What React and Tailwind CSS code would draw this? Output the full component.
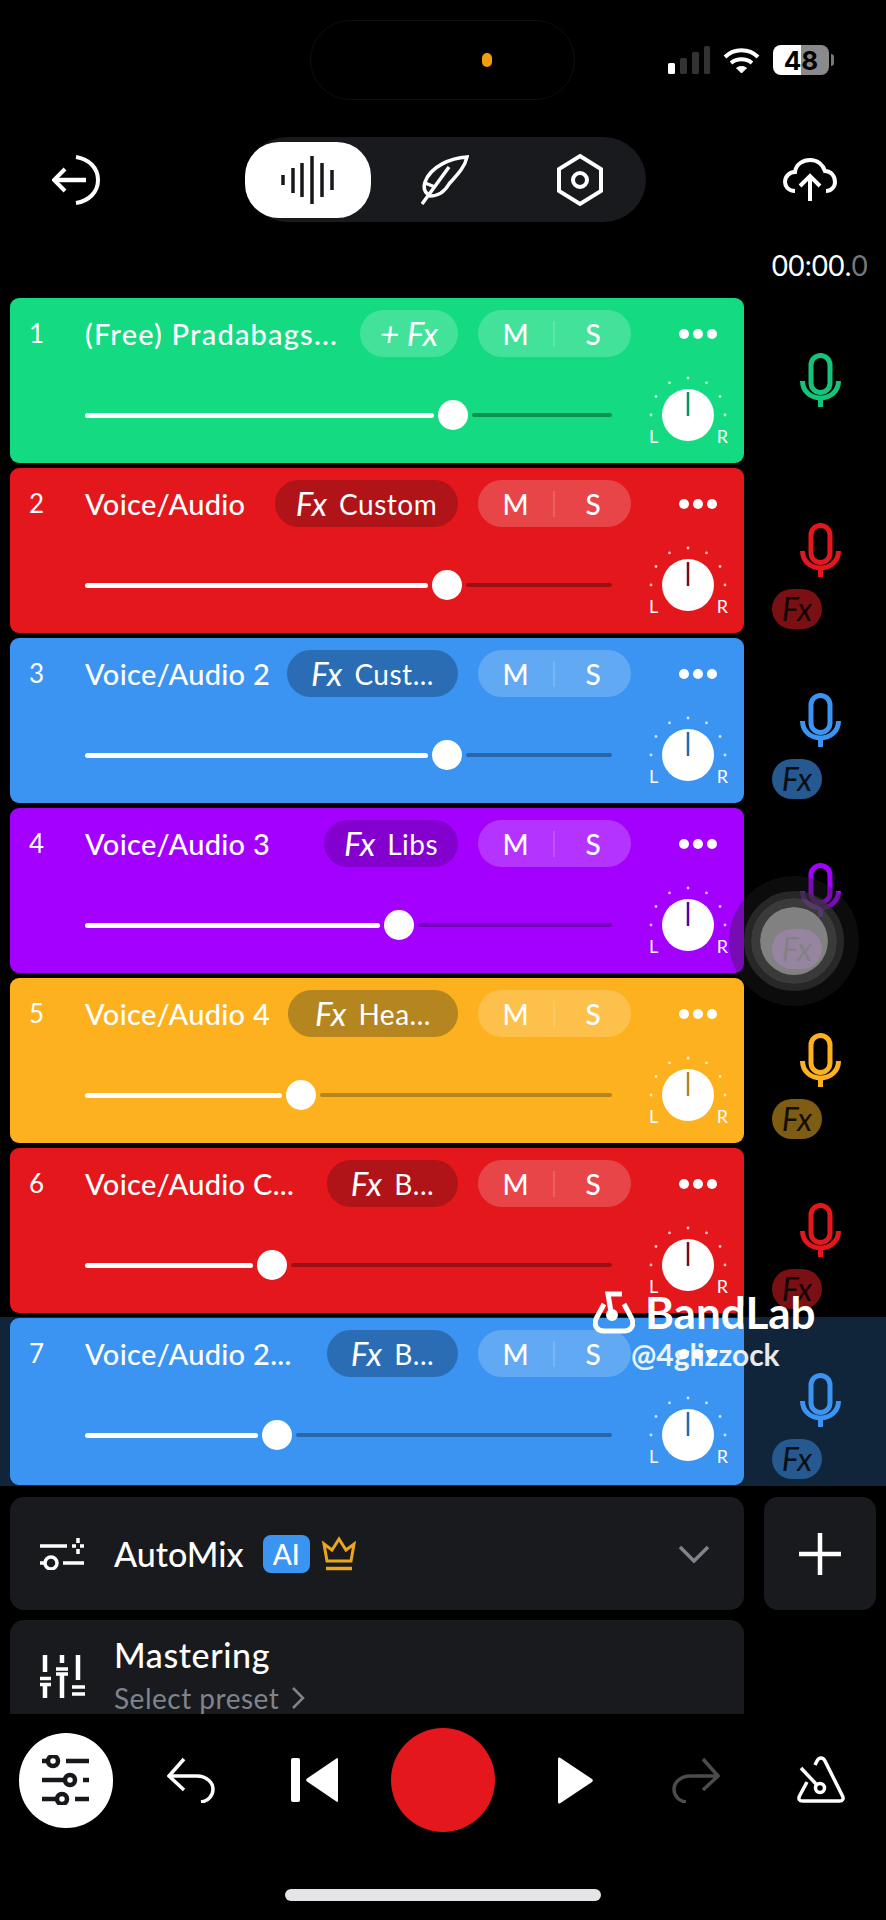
import React from "react";

const tracks = [
  { n: 1, name: "(Free) Pradabags...", nameClass: "tracking-[1.2px]", fx: "+ Fx", pillW: "w-[98px]", pos: 453, bg: "bg-[#14db82]", pill: "bg-white/20", rest: "bg-[#0c9155]", stroke: "#0c9155", mic: "#14c47a" },
  { n: 2, name: "Voice/Audio", nameClass: "tracking-[0.3px]", fx: "Fx", label: "Custom", pillW: "w-[183px]", pos: 447, bg: "bg-[#e3171c]", pill: "bg-[#b01318]", rest: "bg-[#9a1115]", stroke: "#7a0d10", mic: "#e3171c", badge: "bg-[#7a1013]" },
  { n: 3, name: "Voice/Audio 2", nameClass: "tracking-[0.3px]", fx: "Fx", label: "Cust...", pillW: "w-[171px]", pos: 447, bg: "bg-[#3b94f2]", pill: "bg-[#2a6db4]", rest: "bg-[#2a67a8]", stroke: "#2a67a8", mic: "#3b94f2", badge: "bg-[#25598f]" },
  { n: 4, name: "Voice/Audio 3", nameClass: "tracking-[0.3px]", fx: "Fx", label: "Libs", pillW: "w-[134px]", pos: 399, bg: "bg-[#a300ff]", pill: "bg-[#8300cf]", rest: "bg-[#7800bc]", stroke: "#5f0096", mic: "#a300ff", badge: "bg-[#5f0e8c]" },
  { n: 5, name: "Voice/Audio 4", nameClass: "tracking-[0.3px]", fx: "Fx", label: "Hea...", pillW: "w-[170px]", pos: 301, bg: "bg-[#fdb11e]", pill: "bg-[#b5851f]", rest: "bg-[#b5851f]", stroke: "#b5851f", mic: "#fdb11e", badge: "bg-[#7f5c13]" },
  { n: 6, name: "Voice/Audio C...", nameClass: "tracking-[0.3px]", fx: "Fx", label: "B...", pillW: "w-[131px]", pos: 272, bg: "bg-[#e3171c]", pill: "bg-[#b01318]", rest: "bg-[#9a1115]", stroke: "#7a0d10", mic: "#e3171c", badge: "bg-[#7a1013]" },
  { n: 7, name: "Voice/Audio 2...", nameClass: "tracking-[0.3px]", fx: "Fx", label: "B...", pillW: "w-[131px]", pos: 277, bg: "bg-[#3b94f2]", pill: "bg-[#2a6db4]", rest: "bg-[#2a67a8]", stroke: "#2a67a8", mic: "#3b94f2", badge: "bg-[#25598f]", selected: true },
];

const tickAngles = [0, 30, 60, 90, 120, 150, 180];

const Mic = ({ color }) => (
  <svg width="41" height="55" viewBox="0 0 41 55" fill="none" stroke={color} strokeWidth="5">
    <rect x="11" y="2.5" width="19" height="37" rx="9.5" />
    <path d="M2.5 28c0 10 8 17 18 17s18-7 18-17" />
    <path d="M20.5 45v9" />
  </svg>
);

const PanKnob = ({ stroke }) => (
  <div className="relative w-[84px] h-[84px] shrink-0">
    <svg width="84" height="84" viewBox="0 0 84 84">
      {tickAngles.map((a) => (
        <circle
          key={a}
          cx={42 + 37 * Math.cos((a * Math.PI) / 180)}
          cy={42 - 37 * Math.sin((a * Math.PI) / 180)}
          r="1.4"
          fill="#fff"
          opacity="0.75"
        />
      ))}
      <circle cx="42" cy="42" r="26" fill="#fff" />
      <path d="M42 19v24" stroke={stroke} strokeWidth="2.5" />
    </svg>
    <span className="absolute left-[3px] top-[53px] text-[18px] leading-[20px] text-white">L</span>
    <span className="absolute right-[2px] top-[53px] text-[18px] leading-[20px] text-white">R</span>
  </div>
);

const Track = ({ t }) => (
  <div className={`flex pl-[10px] ${t.selected ? "bg-[#10243a] h-[169px] -mt-[1px] pt-[1px]" : "h-[165px] mb-[5px]"}`}>
    <div className={`w-[734px] shrink-0 rounded-[9px] ${t.bg} ${t.selected ? "h-[167px]" : "h-[165px]"}`}>
      <div className="flex items-center h-[47px] mt-[12px] pl-[19px]">
        <span className="w-[56px] text-[26px] text-white">{t.n}</span>
        <span className={`flex-1 min-w-0 text-[29px] font-medium text-white whitespace-nowrap ${t.nameClass}`}>{t.name}</span>
        <div className={`flex items-center justify-center gap-[12px] h-[47px] rounded-full text-white shrink-0 ${t.pill} ${t.pillW}`}>
          <span className="text-[33px] italic">{t.fx}</span>
          {t.label && <span className="text-[28px] tracking-[0.5px]">{t.label}</span>}
        </div>
        <div className="relative flex items-center w-[153px] h-[47px] ml-[20px] rounded-full bg-white/20 text-white text-[28px] font-medium shrink-0">
          <span className="w-[75px] text-center">M</span>
          <span className="w-[2px] h-[26px] bg-white/15"></span>
          <span className="w-[76px] text-center">S</span>
        </div>
        <div className="flex gap-[4px] ml-[48px] mr-[27px]">
          <span className="w-[10px] h-[10px] rounded-full bg-white"></span>
          <span className="w-[10px] h-[10px] rounded-full bg-white"></span>
          <span className="w-[10px] h-[10px] rounded-full bg-white"></span>
        </div>
      </div>
      <div className="flex items-center mt-[16px] pl-[75px]">
        <div className="flex items-center w-[527px] h-[84px] shrink-0">
          <div className="h-[5px] rounded-full bg-white" style={{ width: t.pos - 85 - 19 }}></div>
          <div className="w-[30px] h-[30px] rounded-full bg-white mx-[4px] shrink-0"></div>
          <div className={`h-[4px] flex-1 rounded-full ${t.rest}`}></div>
        </div>
        <div className="ml-[34px]">
          <PanKnob stroke={t.stroke} />
        </div>
      </div>
    </div>
    <div className="flex-1 relative flex flex-col">
      <div className="mt-[55px] ml-[56px]">
        <Mic color={t.mic} />
      </div>
      {t.badge && (
        <div className={`flex items-center justify-center w-[50px] h-[40px] mt-[11px] ml-[28px] rounded-[20px] text-[32px] italic text-black/85 ${t.badge}`}>
          Fx
        </div>
      )}
    </div>
  </div>
);

export default function App() {
  return (
    <div className="relative w-[886px] h-[1920px] bg-black overflow-hidden font-['Lato',sans-serif]">
      {/* Status bar */}
      <div className="flex items-start h-[137px] pt-[20px] pl-[310px]">
        <div className="flex items-center w-[265px] h-[80px] rounded-full border border-[#0e0e0e] pl-[171px]">
          <span className="w-[10px] h-[14px] rounded-full bg-[#f59e0b]"></span>
        </div>
        <div className="flex items-center gap-[13px] ml-[93px] mt-[25px]">
          <svg width="42" height="28" viewBox="0 0 42 28">
            <rect x="0" y="17" width="7" height="11" rx="1.5" fill="#fff" />
            <rect x="12" y="12" width="7" height="16" rx="1.5" fill="#333" />
            <rect x="24" y="6" width="7" height="22" rx="1.5" fill="#333" />
            <rect x="36" y="0" width="6" height="28" rx="1.5" fill="#333" />
          </svg>
          <svg width="37" height="27" viewBox="0 0 37 27" fill="none" stroke="#fff" strokeWidth="4">
            <path d="M2 10c9-9 24-9 33 0" />
            <path d="M8 16c6-5 15-5 21 0" />
            <path d="M18.5 26l-5-5c3-2 7-2 10 0z" fill="#fff" strokeWidth="1" />
          </svg>
          <div className="relative flex items-center">
            <div className="flex items-center justify-center w-[56px] h-[30px] rounded-[8px] bg-[linear-gradient(90deg,#fff_50%,#8a8a8a_50%)] text-black text-[26px] font-bold font-['Inter',sans-serif]">
              48
            </div>
            <span className="w-[3px] h-[12px] ml-[2px] rounded-r-sm bg-[#777]"></span>
          </div>
        </div>
      </div>

      {/* Top nav */}
      <div className="flex items-center h-[85px] pl-[52px]">
        <svg width="48" height="50" viewBox="0 0 48 50" fill="none" stroke="#fff" strokeWidth="4">
          <path d="M24 2c13 2 22 11 22 23s-9 21-22 23" />
          <path d="M34 25H4" strokeWidth="4.5" />
          <path d="M13 14L2 25l11 11" />
        </svg>
        <div className="flex items-center w-[401px] h-[85px] ml-[145px] rounded-full bg-[#191a1d]">
          <div className="flex items-center justify-center w-[126px] h-[76px] rounded-[34px] bg-white shrink-0">
            <svg width="54" height="48" viewBox="0 0 54 48" stroke="#17181c" strokeWidth="3.5" fill="none">
              <path d="M2 19v10M12 12v25M21 7v34" />
              <path d="M31 0v48M41 7v34M51 14v20" />
            </svg>
          </div>
          <div className="ml-[50px]">
            <svg width="48" height="50" viewBox="0 0 48 50" fill="none" stroke="#fff" strokeWidth="3.5">
              <path d="M46 2C30 3 10 11 4 27c-2 6 0 11 5 14 8 0 15-5 19-12C36 20 44 12 46 2z" />
              <path d="M1 49L28 12" />
              <path d="M4 28l10 4" />
            </svg>
          </div>
          <div className="ml-[87px]">
            <svg width="48" height="54" viewBox="0 0 48 54" fill="none" stroke="#fff" strokeWidth="4">
              <path d="M24 3l21 13v22L24 51 3 38V16z" />
              <circle cx="24" cy="27" r="7" />
            </svg>
          </div>
        </div>
        <div className="ml-[137px]">
          <svg width="54" height="43" viewBox="0 0 54 43" fill="none" stroke="#fff" strokeWidth="4">
            <path d="M12 33C5 33 2 28 2 24c0-6 5-10 10-10C13 6 20 2 27 2c8 0 13 5 15 11 6 0 10 5 10 11 0 5-4 9-9 9" />
            <path d="M27 43V19M17 28l10-10 10 10" />
          </svg>
        </div>
      </div>

      {/* Timer */}
      <div className="flex justify-end h-[76px] pr-[18px] pt-[27px]">
        <span className="text-[28px] leading-[32px] text-white tracking-[0.2px]">
          00:00.<span className="text-[#777]">0</span>
        </span>
      </div>

      {tracks.map((t) => (
        <Track key={t.n} t={t} />
      ))}

      {/* AutoMix / Mastering */}
      <div className="flex pl-[10px] mt-[11px]">
        <div className="flex items-center w-[734px] h-[113px] rounded-[14px] bg-[#191a1d] pl-[29px] text-white">
          <svg width="46" height="32" viewBox="0 0 46 32" fill="none" stroke="#fff" strokeWidth="3.5">
            <path d="M1 8h27M24 25h21" />
            <circle cx="12" cy="25" r="6" />
            <path d="M1 25h4" />
            <path d="M39 0v5M39 11v5M33 8h4M41 8h4" />
          </svg>
          <span className="ml-[29px] text-[34px] font-medium">AutoMix</span>
          <span className="flex items-center justify-center w-[47px] h-[38px] ml-[19px] rounded-[8px] bg-[#3b94f2] text-[28px] font-medium">AI</span>
          <svg className="ml-[12px]" width="34" height="35" viewBox="0 0 34 35" fill="none" stroke="#eba71c" strokeWidth="3">
            <path d="M5 25L2 8l8 6 7-11 7 11 8-6-3 17z" />
            <path d="M4 32.5h26" strokeWidth="3.5" />
          </svg>
          <svg className="ml-auto mr-[34px]" width="32" height="20" viewBox="0 0 32 20" fill="none" stroke="#7f848c" strokeWidth="3.5">
            <path d="M2 3l14 14L30 3" />
          </svg>
        </div>
        <div className="flex items-center justify-center w-[112px] h-[113px] ml-[20px] rounded-[14px] bg-[#191a1d]">
          <svg width="46" height="46" viewBox="0 0 46 46" stroke="#fff" strokeWidth="4.5">
            <path d="M23 2v42M2 23h42" />
          </svg>
        </div>
      </div>
      <div className="flex items-center w-[734px] h-[94px] ml-[10px] mt-[10px] rounded-t-[14px] bg-[#191a1d] pl-[30px] overflow-hidden text-white">
        <svg className="mt-[18px]" width="45" height="43" viewBox="0 0 45 43" fill="none" stroke="#fff" strokeWidth="4.5">
          <path d="M5 0v17M22 0v8M38 0v25M5 30v13M22 20v23" />
          <path d="M0 23.500h11M0 29.500h11M16 14h12M16 19h12M32 32h13M32 39h13" strokeWidth="3.5" />
        </svg>
        <div className="flex flex-col ml-[29px] mt-[14px]">
          <span className="text-[34px] leading-[40px] font-medium tracking-[0.6px]">Mastering</span>
          <span className="flex items-center gap-[12px] mt-[8px] text-[28px] leading-[30px] text-[#7f848c] tracking-[0.5px]">
            Select preset
            <svg width="14" height="24" viewBox="0 0 14 24" fill="none" stroke="#7f848c" strokeWidth="2.5">
              <path d="M2 2l10 10L2 22" />
            </svg>
          </span>
        </div>
      </div>

      {/* Transport */}
      <div className="flex items-center h-[132px] pl-[19px]">
        <div className="flex items-center justify-center w-[94px] h-[95px] rounded-full bg-white shrink-0">
          <svg width="48" height="50" viewBox="0 0 48 50" fill="none" stroke="#17181c" strokeWidth="4.5">
            <path d="M0 6h5M24 6h23M0 25h22M41 25h6M0 44h15M33 44h14" />
            <circle cx="11" cy="6" r="5" />
            <circle cx="28" cy="25" r="5" />
            <circle cx="20" cy="44" r="5" />
          </svg>
        </div>
        <svg className="ml-[54px]" width="48" height="46" viewBox="0 0 48 46" fill="none" stroke="#fff" strokeWidth="3.5">
          <path d="M17 2L2 19l15 14" />
          <path d="M2 19h28c10 0 16 7 16 13s-4 12-12 13" />
        </svg>
        <svg className="ml-[76px]" width="48" height="44" viewBox="0 0 48 44" fill="#fff">
          <rect x="0" y="0" width="9" height="44" rx="2" />
          <path d="M47 1v42a1 1 0 0 1-1.6.6L16 23.5a2 2 0 0 1 0-3L45.4.4A1 1 0 0 1 47 1z" />
        </svg>
        <div className="w-[104px] h-[104px] ml-[52px] rounded-full bg-[#e3171c] shrink-0"></div>
        <svg className="ml-[63px]" width="35" height="47" viewBox="0 0 35 47" fill="#fff">
          <path d="M0 2v43c0 1.5 1.5 2 2.5 1L34 25a2 2 0 0 0 0-3L2.5 1C1.5 0 0 .5 0 2z" />
        </svg>
        <svg className="ml-[79px]" width="48" height="46" viewBox="0 0 48 46" fill="none" stroke="#4c4c4e" strokeWidth="3.5">
          <path d="M31 2l15 17-15 14" />
          <path d="M46 19H18C8 19 2 26 2 32s4 12 12 13" />
        </svg>
        <svg className="ml-[77px]" width="48" height="48" viewBox="0 0 48 48" fill="none" stroke="#fff" strokeWidth="3.5">
          <path d="M10 26L2.500 40c-1.500 3 0 5 3 5h37c3 0 4.500-2 3-5L28 5c-2-4-6-4-8 0l-2 4" />
          <path d="M4 12l16 17" />
          <circle cx="23" cy="32" r="4.500" />
        </svg>
      </div>

      {/* Home indicator */}
      <div className="w-[316px] h-[12px] mt-[43px] ml-[285px] rounded-full bg-[#e5e5e8]"></div>

      {/* Touch indicator */}
      <div className="absolute left-[729px] top-[876px] flex items-center justify-center w-[130px] h-[130px] rounded-full bg-[#222]/35">
        <div className="flex items-center justify-center w-[100px] h-[100px] rounded-full border-[7px] border-[#333]/70">
          <div className="flex items-center justify-center w-[86px] h-[86px] rounded-full border-[9px] border-[#4a4a4a]/75">
            <div className="w-[68px] h-[68px] rounded-full bg-[#c0c0c0]/65"></div>
          </div>
        </div>
      </div>

      {/* Watermark */}
      <div className="absolute left-[593px] top-[1290px] flex flex-col text-white">
        <div className="flex items-center gap-[10px]">
          <svg width="42" height="44" viewBox="0 0 42 44" fill="none" stroke="#fff" strokeWidth="5">
            <path d="M11 14L3.500 28C0 35 4 41 11 41h20c7 0 11-6 7.500-13L31 14" />
            <path d="M29 4H15l3 18" />
            <circle cx="19" cy="25" r="3.500" fill="#fff" />
          </svg>
          <span className="text-[44px] leading-[44px] font-bold">BandLab</span>
        </div>
        <span className="ml-[38px] mt-[4px] text-[30px] leading-[32px] font-bold text-white/90">@4glizzock</span>
      </div>
    </div>
  );
}
